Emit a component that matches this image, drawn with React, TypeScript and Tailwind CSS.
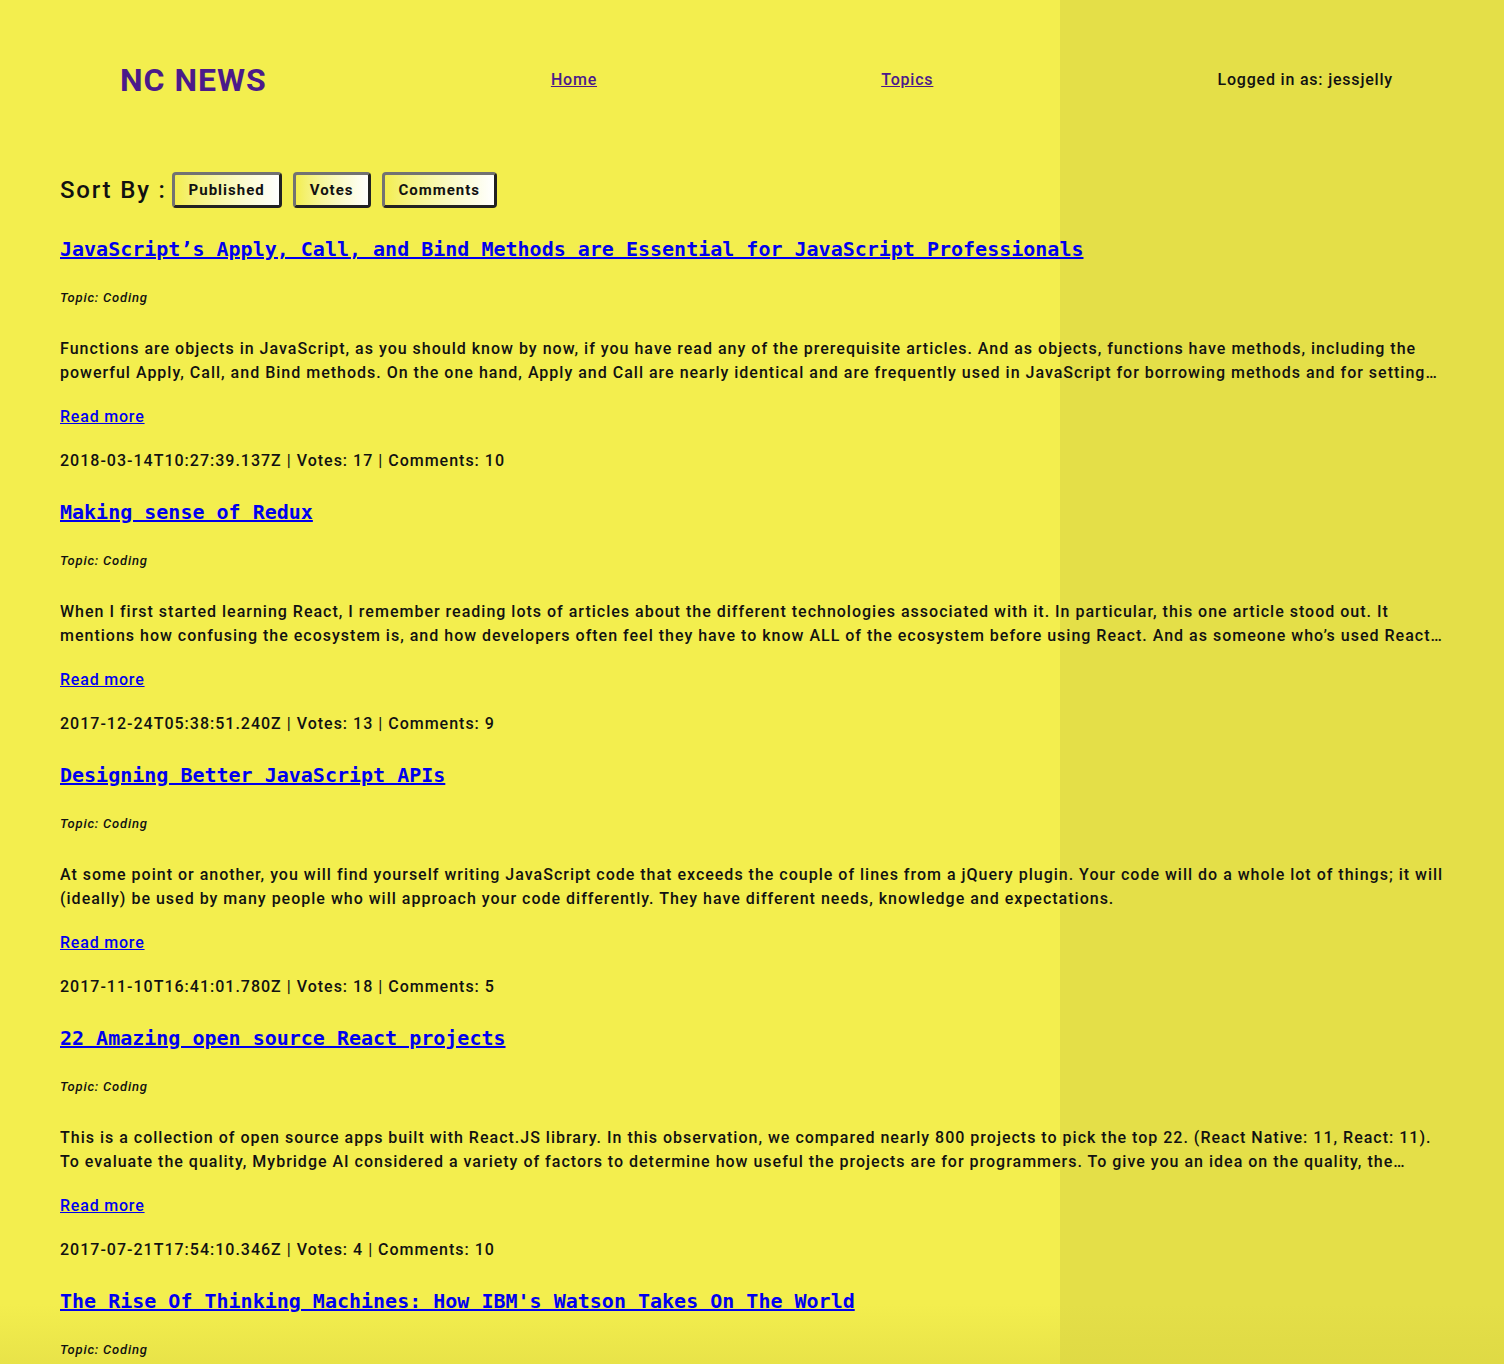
import React from 'react';

const articles = [
  {
    title: 'JavaScript’s Apply, Call, and Bind Methods are Essential for JavaScript Professionals',
    topic: 'Coding',
    body: 'Functions are objects in JavaScript, as you should know by now, if you have read any of the prerequisite articles. And as objects, functions have methods, including the powerful Apply, Call, and Bind methods. On the one hand, Apply and Call are nearly identical and are frequently used in JavaScript for borrowing methods and for setting the this value explicitly. We also use Apply for variable-arity functions; you will learn more about this in a bit.',
    created: '2018-03-14T10:27:39.137Z',
    votes: 17,
    comments: 10,
  },
  {
    title: 'Making sense of Redux',
    topic: 'Coding',
    body: 'When I first started learning React, I remember reading lots of articles about the different technologies associated with it. In particular, this one article stood out. It mentions how confusing the ecosystem is, and how developers often feel they have to know ALL of the ecosystem before using React. And as someone who’s used React daily for the past 8 months or so, I can definitely say that I’m still barely scratching the surface in terms of understanding how the entire ecosystem works!',
    created: '2017-12-24T05:38:51.240Z',
    votes: 13,
    comments: 9,
  },
  {
    title: 'Designing Better JavaScript APIs',
    topic: 'Coding',
    body: 'At some point or another, you will find yourself writing JavaScript code that exceeds the couple of lines from a jQuery plugin. Your code will do a whole lot of things; it will (ideally) be used by many people who will approach your code differently. They have different needs, knowledge and expectations.',
    created: '2017-11-10T16:41:01.780Z',
    votes: 18,
    comments: 5,
  },
  {
    title: '22 Amazing open source React projects',
    topic: 'Coding',
    body: 'This is a collection of open source apps built with React.JS library. In this observation, we compared nearly 800 projects to pick the top 22. (React Native: 11, React: 11). To evaluate the quality, Mybridge AI considered a variety of factors to determine how useful the projects are for programmers. To give you an idea on the quality, the average number of Github stars from the 22 projects was 1,681.',
    created: '2017-07-21T17:54:10.346Z',
    votes: 4,
    comments: 10,
  },
  {
    title: "The Rise Of Thinking Machines: How IBM's Watson Takes On The World",
    topic: 'Coding',
    body: 'Many people associate IBM with serious, professional business computing. But IBM has a long history of building machines that play games, and Watson is its latest and greatest.',
    created: '2017-05-13T18:19:24.511Z',
    votes: 0,
    comments: 5,
  },
];

const sorts = ['Published', 'Votes', 'Comments'];

export default function App() {
  return (
    <div className="relative h-screen overflow-hidden bg-[#f3ee4e] font-['Roboto',sans-serif] font-medium tracking-[0.8px] text-[#111]">
      <div className="pointer-events-none absolute inset-y-0 right-0 w-[444px] bg-[#e4df48]" />
      <div className="pointer-events-none absolute inset-x-0 bottom-0 h-[60px] bg-gradient-to-b from-transparent to-[#d8d240]/40" />

      <div className="relative">
        <header className="flex h-[160px] items-center justify-between pl-[120px] pr-[111px]">
          <h1 className="text-[32px] font-bold tracking-[1px] text-[#4b1a8a]">NC NEWS</h1>
          <a href="#" className="text-[16px] text-[#4b1a8a] underline">Home</a>
          <a href="#" className="text-[16px] text-[#4b1a8a] underline">Topics</a>
          <span className="text-[16px]">Logged in as: jessjelly</span>
        </header>

        <main className="px-[60px]">
          <div className="mt-[12px] flex items-center gap-[5px]">
            <span className="text-[24px] leading-[36px] tracking-[1.8px]">Sort By :</span>
            <div className="flex gap-[11px]">
              {sorts.map((s) => (
                <button
                  key={s}
                  type="button"
                  className="h-[36px] rounded-[4px] border-[3px] border-t-[#727272] border-l-[#727272] border-r-[#222] border-b-[#222] bg-gradient-to-r from-[#f3ee4e] to-white px-[14px] text-[15px] font-bold tracking-[1px]"
                >
                  {s}
                </button>
              ))}
            </div>
          </div>

          {articles.map((a, i) => (
            <article key={i} className="mt-[29px]">
              <h2 className="font-['DejaVu_Sans_Mono',monospace] text-[20px] font-bold leading-[24px] tracking-normal">
                <a href="#" className="text-[#0000ee] underline">{a.title}</a>
              </h2>
              <p className="mt-[27px] text-[13px] italic leading-[20px]">Topic: {a.topic}</p>
              <p className="mt-[29px] line-clamp-2 text-[16px] leading-[24px] tracking-[1px]">{a.body}</p>
              <p className="mt-[22px] text-[16px] leading-[20px]">
                <a href="#" className="text-[#0000ee] underline">Read more</a>
              </p>
              <p className="mt-[24px] text-[16px] leading-[20px] tracking-[1px]">
                {a.created} | Votes: {a.votes} | Comments: {a.comments}
              </p>
            </article>
          ))}
        </main>
      </div>
    </div>
  );
}
